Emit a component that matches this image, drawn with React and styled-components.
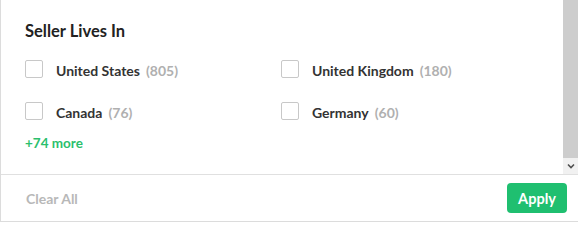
import React from 'react';
import styled, { createGlobalStyle } from 'styled-components';

const GlobalStyle = createGlobalStyle`
  body {
    margin: 0;
    background: #ffffff;
    font-family: Lato, "Liberation Sans", sans-serif;
  }
`;

const Panel = styled.div`
  width: 578px;
  box-sizing: border-box;
  border-left: 1px solid #dcdcdc;
  border-bottom: 1px solid #dcdcdc;
  background: #fff;
`;

const Body = styled.div`
  display: flex;
  height: 174px;
`;

const Content = styled.div`
  flex: 1;
  padding: 21px 0 0 24px;
`;

const Title = styled.h3`
  margin: 0 0 19px;
  font-size: 16.5px;
  font-weight: 700;
  color: #222;
  line-height: 20px;
`;

const Grid = styled.div`
  display: grid;
  grid-template-columns: 256px 256px;
  row-gap: 24px;
`;

const Option = styled.label`
  display: flex;
  align-items: center;
  gap: 13px;
  height: 18px;
  cursor: pointer;
`;

const Box = styled.span`
  box-sizing: border-box;
  width: 18px;
  height: 18px;
  border: 1px solid #c8c8c8;
  border-radius: 2px;
  background: #fff;
`;

const Name = styled.span`
  font-size: 14px;
  font-weight: 700;
  color: #333;
`;

const Count = styled.span`
  margin-left: 6px;
  font-size: 14px;
  font-weight: 700;
  color: #b0b0b0;
`;

const More = styled.a`
  display: block;
  margin-top: 15px;
  font-size: 13.5px;
  font-weight: 700;
  color: #2bbf6d;
  cursor: pointer;
`;

const ScrollTrack = styled.div`
  width: 15px;
  display: flex;
  flex-direction: column;
  background: #f1f1f1;
`;

const Thumb = styled.div`
  flex: 1;
  background: #cdcdcd;
`;

const ArrowBtn = styled.div`
  height: 16px;
  display: flex;
  align-items: center;
  justify-content: center;
  background: #f1f1f1;
`;

const Footer = styled.div`
  display: flex;
  align-items: center;
  justify-content: space-between;
  height: 46px;
  padding: 0 11px 0 25px;
  border-top: 1px solid #e0e0e0;
`;

const ClearAll = styled.button`
  border: none;
  background: none;
  padding: 0;
  font-family: inherit;
  font-size: 14px;
  font-weight: 700;
  color: #b8b8b8;
  cursor: pointer;
`;

const ApplyButton = styled.button`
  width: 60px;
  height: 30px;
  border: none;
  border-radius: 4px;
  background: #1fbf70;
  color: #fff;
  font-family: inherit;
  font-size: 14.5px;
  font-weight: 700;
  cursor: pointer;
`;

const countries = [
  { name: 'United States', count: 805 },
  { name: 'United Kingdom', count: 180 },
  { name: 'Canada', count: 76 },
  { name: 'Germany', count: 60 },
];

export default function App() {
  return (
    <>
      <GlobalStyle />
      <Panel>
        <Body>
          <Content>
            <Title>Seller Lives In</Title>
            <Grid>
              {countries.map((c) => (
                <Option key={c.name}>
                  <Box />
                  <span>
                    <Name>{c.name}</Name>
                    <Count>({c.count})</Count>
                  </span>
                </Option>
              ))}
            </Grid>
            <More>+74 more</More>
          </Content>
          <ScrollTrack>
            <Thumb />
            <ArrowBtn>
              <svg width="8" height="6" viewBox="0 0 8 6">
                <path d="M1 1.5 L4 4.5 L7 1.5" fill="none" stroke="#505050" strokeWidth="1.6" />
              </svg>
            </ArrowBtn>
          </ScrollTrack>
        </Body>
        <Footer>
          <ClearAll>Clear All</ClearAll>
          <ApplyButton>Apply</ApplyButton>
        </Footer>
      </Panel>
    </>
  );
}
